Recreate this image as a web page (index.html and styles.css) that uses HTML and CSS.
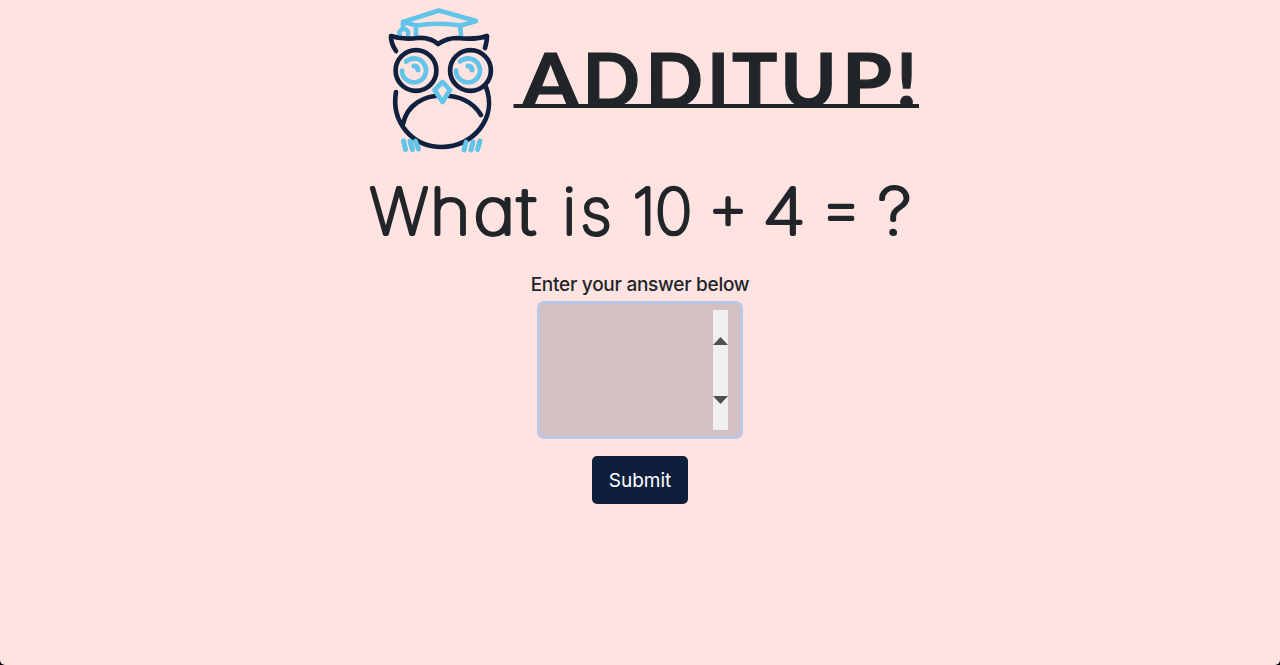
FILE: index.html
```html
<!DOCTYPE html>
<html lang="en">
<head>
<meta charset="utf-8">
<title>AddItUp!</title>
<link rel="stylesheet" href="styles.css">
</head>
<body>
<header class="brand">
  <svg class="owl" viewBox="380 0 120 160" aria-hidden="true">
    <g class="sky">
      <path d="M403 22L439 10.500L476 21L461 25.500M403 22L416 25.500Q439 22 461 25.500M416 25V35M460 25L461 35M403 22V29M400 35C398 32 401 29 404 29C407 29 409 32 408 35"/>
      <path d="M402 70.500A12 12 0 1 0 406 61.500Q409 59 413 59M456 70.500A12 12 0 1 0 460 61.500Q463 59 467 59"/>
      <path class="shine" d="M414 66Q418 66 418 70M468 66Q472 66 472 70"/>
      <path d="M403.500 141L405.500 149.500M410 141L412.500 149.500M415.500 141L418.500 149M466 142L464 150M473 142L471 150M480 141L477.500 149.500"/>
    </g>
    <g class="navy">
      <path d="M396 51Q391 44 391 36Q403 40 418 38Q430 37 438 44Q447 38 457 38Q476 40 487 36Q487 42 485 48"/>
      <circle cx="416" cy="70.500" r="20.400"/>
      <circle cx="470.500" cy="70.500" r="20.400"/>
      <path d="M396 92C391 122 412 147 442 147C472 147 498 119 486 87M403 124C407 104 425 95.500 442 95.500C460 95.500 473 102 481 115"/>
    </g>
    <path class="beak" d="M442.500 82L450 90L442.500 102L434.500 90Z"/>
    <g class="sky">
      <path d="M403.500 141L405.500 149.500M410 141L412.500 149.500M415.500 141L418.500 149M466 142L464 150M473 142L471 150M480 141L477.500 149.500"/>
    </g>
  </svg>
  <h1 class="name">
    <svg class="name-art" viewBox="505 0 420 160">
      <text class="name-text" transform="translate(522.200 107.300) scale(1.080 1)">A</text>
      <text class="name-text" y="107.300" x="582.500 645.500 707 732 780.500">DDITU</text>
      <text class="name-text" transform="translate(842 107.300) scale(1.070 1)">P</text>
      <text class="name-text" y="107.300" x="896">!</text>
      <path class="rule" d="M513.500 106H919"/>
    </svg>
  </h1>
</header>
<main class="quiz">
  <h2 class="question">
    <svg class="question-art" viewBox="360 160 560 110">
      <text class="question-text" y="234" x="369.800">W</text>
      <text class="question-text" transform="translate(430 234) scale(1.100 1)">h</text>
      <text class="question-text" transform="translate(473.500 234) scale(1.140 1)">a</text>
      <text class="question-text" transform="translate(517.500 234) scale(1.200 1)">t </text>
      <text class="question-text" y="234" x="562.500 580.500 612">is </text>
      <text class="question-text" y="234" x="632.500 655 693">10 </text>
      <text class="question-text" y="229" x="708">+ </text>
      <text class="question-text" transform="translate(762.500 234) scale(1.150 1)">4 </text>
      <text class="question-text" transform="translate(820 229.500) scale(1.050 1)">= </text>
      <text class="question-text" transform="translate(878 234) scale(1.100 1)">?</text>
    </svg>
  </h2>
  <form class="answer">
    <label class="label">Enter your answer below</label>
    <div class="field" tabindex="0"><div class="spinner"><i class="up"></i><i class="down"></i></div></div>
    <button class="submit" type="button">Submit</button>
  </form>
</main>
</body>
</html>
```
FILE: styles.css
```css
* { box-sizing: border-box; }
html { background: #000; }
body { margin: 0; height: 665px; overflow: hidden; background: #ffe3e0; border-radius: 0 0 5px 5px; color: #212529; font-family: Inter, "Liberation Sans", sans-serif; }
.brand { display: flex; justify-content: center; height: 160px; padding-left: 25px; }
.owl { width: 120px; height: 160px; margin-right: 5px; }
.owl path, .owl circle { fill: none; stroke-width: 4.700; stroke-linecap: round; stroke-linejoin: round; }
.sky { stroke: #61c4e8; }
.navy { stroke: #10213f; }
.owl .shine { stroke-width: 5; }
.owl .beak { stroke: #61c4e8; fill: #ffe3e0; }
.name { margin: 0; }
.name-art { display: block; width: 420px; height: 160px; }
.name-text { font: 700 75.500px Lato, sans-serif; fill: #212529; stroke: #212529; stroke-width: 1.200; }
.rule { stroke: #212529; stroke-width: 3.800; }
.quiz { display: flex; flex-direction: column; align-items: center; }
.question { margin: 0; }
.question-art { display: block; width: 560px; height: 110px; }
.question-text { font: 100 63px Inter, sans-serif; font-feature-settings: "cv11"; fill: #212529; stroke: #212529; stroke-width: 3.900; stroke-linejoin: round; }
.answer { display: flex; flex-direction: column; align-items: center; }
.label { padding-top: 2px; font-size: 19px; line-height: 26px; font-weight: 500; letter-spacing: -0.260px; }
.field { display: flex; justify-content: flex-end; width: 206px; height: 138px; margin: 3px 0 17px; padding: 6px 12px; border: 3px solid #bac8e7; border-radius: 7px; background: #d4c0c0; outline: none; }
.spinner { display: flex; flex-direction: column; justify-content: space-between; width: 15px; height: 120px; padding: 27px 0 26px; background: #f0f0f0; }
.up, .down { height: 8px; background: #505050; }
.up { clip-path: polygon(50% 0, 100% 100%, 0 100%); }
.down { clip-path: polygon(0 0, 100% 0, 50% 100%); }
.submit { width: 96px; height: 48px; padding: 0; border: 0; border-radius: 5px; background: #0e1f3e; color: #fff; font: 400 19px Inter, sans-serif; }
```
